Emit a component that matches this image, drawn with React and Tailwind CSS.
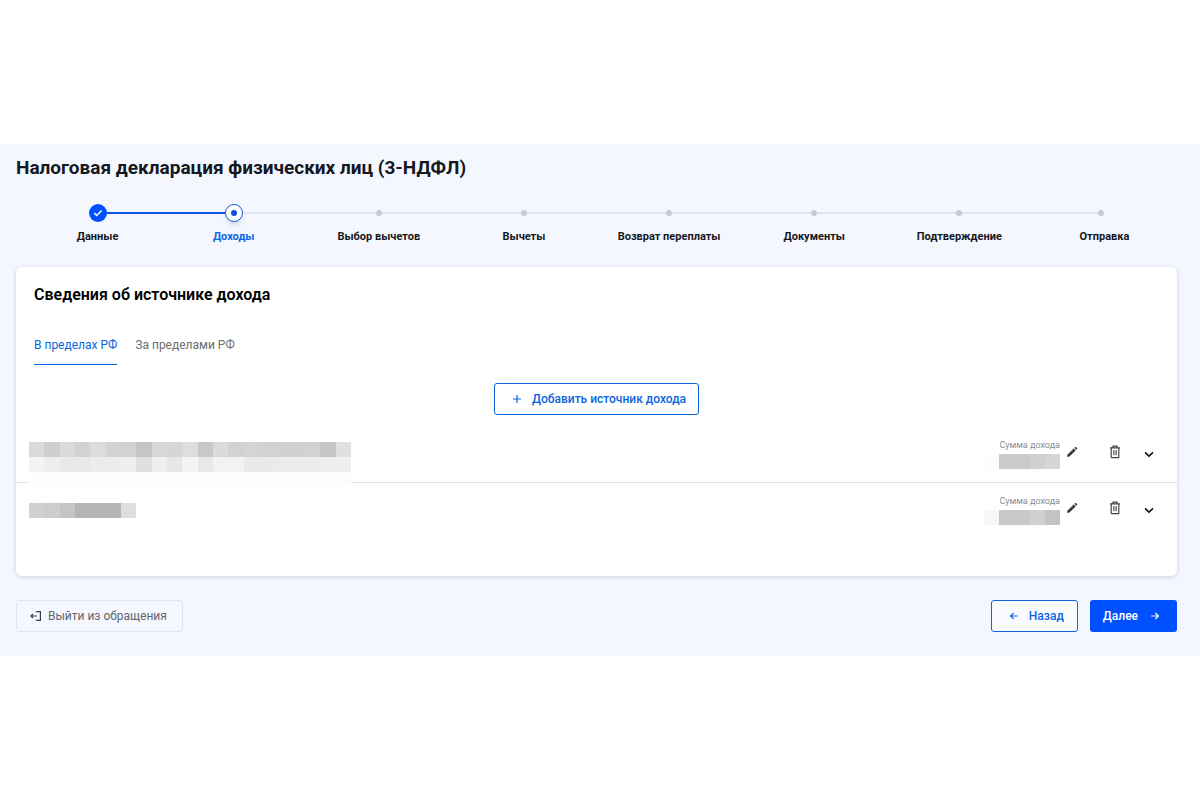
import React, { useState } from "react";

const steps = [
  "Данные",
  "Доходы",
  "Выбор вычетов",
  "Вычеты",
  "Возврат переплаты",
  "Документы",
  "Подтверждение",
  "Отправка",
];

const tabs = ["В пределах РФ", "За пределами РФ"];

// Masked values are drawn as rows of gray cells
const sources = [
  {
    id: 1,
    name: [
      ["#dadada", "#cecece", "#dadada", "#d2d2d2", "#dcdcdc", "#d3d3d3", "#d2d2d2", "#c5c5c5", "#d7d7d7", "#d6d6d6", "#dedede", "#c8c8c8", "#dbdbdb", "#d2d2d2", "#d4d4d4", "#d2d2d2", "#d1d1d1", "#d1d1d1", "#d2d2d2", "#c6c6c6", "#e0e0e0"],
      ["#f3f3f3", "#eeeeee", "#e9e9e9", "#e9e9e9", "#ececec", "#ebebeb", "#eeeeee", "#e0e0e0", "#efefef", "#e7e7e7", "#f3f3f3", "#e8e8e8", "#f2f2f2", "#f2f2f2", "#e9e9e9", "#eaeaea", "#ebebeb", "#ebebeb", "#ececec", "#eeeeee", "#efefef"],
    ],
    sum: ["#fdfdfd", "#cacaca", "#cacaca", "#d0d0d0", "#d6d6d6"],
  },
  {
    id: 2,
    name: [["#d0d0d0", "#cdcdcd", "#c5c5c5", "#b5b5b5", "#b5b5b5", "#b5b5b5", "#dedede"]],
    sum: ["#f7f7f7", "#c8c8c8", "#c8c8c8", "#d0d0d0", "#c3c3c3"],
  },
];

const Cells = ({ colors }) => (
  <div className="flex">
    {colors.map((color, i) => (
      <span
        key={i}
        className="h-[15px] flex-1"
        style={{ backgroundColor: color }}
      />
    ))}
  </div>
);

const PlusIcon = () => (
  <svg width="10" height="10" viewBox="0 0 10 10" fill="none" stroke="currentColor" strokeWidth="1.2">
    <path d="M5 1v8M1 5h8" />
  </svg>
);

const ArrowIcon = ({ className }) => (
  <svg
    className={className}
    width="10"
    height="10"
    viewBox="0 0 10 10"
    fill="none"
    stroke="currentColor"
    strokeWidth="1.2"
  >
    <path d="M1.2 5h7.4M5.4 2 8.4 5 5.4 8" />
  </svg>
);

const ExitIcon = () => (
  <svg width="12" height="12" viewBox="0 0 12 12" fill="none" stroke="#3a3e46" strokeWidth="1.2">
    <path d="M5.8 1.6h4.6v8.8H5.8" />
    <path d="M1 6h6M3 4 1 6l2 2" />
  </svg>
);

const PencilIcon = () => (
  <svg width="12" height="12" viewBox="0 0 12 12" fill="#3c3c3c">
    <path d="M1 11l.5-2.5 6.2-6 2 2-6.2 6L1 11z" />
    <path d="M8.3 1.9l.8-.8c.3-.3.7-.3 1 0l.9.9c.3.3.3.7 0 1l-.8.8-1.9-1.9z" />
  </svg>
);

const TrashIcon = () => (
  <svg width="12" height="14" viewBox="0 0 12 14" fill="none" stroke="#444" strokeWidth="1.2">
    <path d="M1 2.8h10M4 2.6V1.2h4v1.4" />
    <path d="M2.2 3v8.7c0 .5.4.9.9.9h5.8c.5 0 .9-.4.9-.9V3" />
    <path d="M4.6 5.2v5M6 5.2v5M7.4 5.2v5" strokeWidth=".8" />
  </svg>
);

const ChevronIcon = () => (
  <svg width="10" height="7" viewBox="0 0 10 7" fill="none" stroke="#111" strokeWidth="1.6">
    <path d="M1 1.4l4 3.8 4-3.8" />
  </svg>
);

const StepMarker = ({ state }) => {
  if (state === "done") {
    return (
      <span className="flex h-[18px] w-[18px] items-center justify-center rounded-full bg-[#0050ff]">
        <svg width="10" height="8" viewBox="0 0 10 8" fill="none" stroke="#fff" strokeWidth="1.5">
          <path d="M1.2 4l2.5 2.4L8.6 1.4" />
        </svg>
      </span>
    );
  }
  if (state === "current") {
    return (
      <span className="flex h-[18px] w-[18px] items-center justify-center rounded-full border border-[#0f5fe0] bg-white shadow-md">
        <span className="h-[6px] w-[6px] rounded-full bg-[#0b52d8]" />
      </span>
    );
  }
  return <span className="h-[6px] w-[6px] rounded-full bg-[#c7cad3]" />;
};

const Stepper = ({ current }) => {
  const lineColor = (visible, passed) => {
    if (!visible) return "bg-transparent";
    return passed ? "bg-[#0b55dc]" : "bg-[#e0e3ea]";
  };

  return (
    <ol className="grid grid-cols-8">
      {steps.map((step, i) => {
        const state = i < current ? "done" : i === current ? "current" : "next";
        return (
          <li key={step} className="first:pl-[18px]">
            <div
              className={`flex h-[18px] items-center ${
                i === steps.length - 1 ? "pr-1.5" : ""
              }`}
            >
              <span className={`h-[2px] flex-1 ${lineColor(i > 0, i <= current)}`} />
              <StepMarker state={state} />
              <span
                className={`h-[2px] flex-1 ${lineColor(
                  i < steps.length - 1,
                  i < current
                )}`}
              />
            </div>
            <p
              className={`mt-[7px] whitespace-nowrap text-center text-[11px] leading-4 font-bold ${
                state === "current" ? "text-[#0a66e8]" : "text-[#15181e]"
              }`}
            >
              {step}
            </p>
          </li>
        );
      })}
    </ol>
  );
};

const SourceRow = ({ source }) => (
  <li className="flex h-14 items-start border-b border-[#e2e2e2] pl-[13px] pr-[23px] last:border-b-0">
    {source.name.length > 1 ? (
      <div className="relative mt-[15px] w-[322px]">
        {source.name.map((colors, i) => (
          <Cells key={i} colors={colors} />
        ))}
        <div className="h-3 bg-[#fdfdfd]" />
      </div>
    ) : (
      <div className="mt-5 w-[107px]">
        <Cells colors={source.name[0]} />
      </div>
    )}

    <div className="ml-auto mt-3 w-[76px]">
      <p className="text-right text-[9px] leading-3 text-[#8b8b8b]">Сумма дохода</p>
      <div className="mt-[3px]">
        <Cells colors={source.sum} />
      </div>
    </div>

    <button className="ml-1.5 mt-[19px]" aria-label="Редактировать">
      <PencilIcon />
    </button>
    <button className="ml-[31px] mt-[18px]" aria-label="Удалить">
      <TrashIcon />
    </button>
    <button className="ml-[23px] mt-6" aria-label="Развернуть">
      <ChevronIcon />
    </button>
  </li>
);

const App = () => {
  const [activeTab, setActiveTab] = useState(0);

  return (
    <div className="flex min-h-screen items-center bg-white font-['Roboto','Noto_Sans',sans-serif]">
      <main className="w-full bg-[#f4f7fe] pb-6 pl-4 pr-[23px] pt-3">
        <h1 className="text-[19px] leading-6 font-bold text-[#15181e]">
          Налоговая декларация физических лиц (3-НДФЛ)
        </h1>

        <div className="mt-6">
          <Stepper current={1} />
        </div>

        <section className="mt-[22px] rounded-md bg-white pb-[37px] pt-4 shadow-[0_1px_4px_rgba(40,50,80,0.2)]">
          <div className="px-[18px]">
            <h2 className="text-base leading-6 font-semibold text-black">
              Сведения об источнике дохода
            </h2>

            <div className="mt-6 flex gap-[18px]" role="tablist">
              {tabs.map((tab, i) => (
                <button
                  key={tab}
                  role="tab"
                  aria-selected={activeTab === i}
                  onClick={() => setActiveTab(i)}
                  className={`border-b pb-2.5 pt-[5px] text-xs leading-[18px] ${
                    activeTab === i
                      ? "border-b-[#0a66e0] text-[#0a66e0]"
                      : "border-b-transparent text-[#6e6e6e]"
                  }`}
                >
                  {tab}
                </button>
              ))}
            </div>

            <div className="mt-[18px] flex justify-center">
              <button className="flex h-8 items-center gap-2.5 rounded-[3px] border border-[#0a66e0] pl-[17px] pr-3 text-xs font-medium text-[#0a66e0]">
                <PlusIcon />
                Добавить источник дохода
              </button>
            </div>
          </div>

          <ul className="mt-3">
            {sources.map((source) => (
              <SourceRow key={source.id} source={source} />
            ))}
          </ul>
        </section>

        <footer className="mt-6 flex items-center text-xs">
          <button className="flex h-8 items-center gap-1.5 rounded-[3px] border border-[#e0e4ec] pl-[13px] pr-[15px] text-[#62666f]">
            <ExitIcon />
            Выйти из обращения
          </button>
          <button className="ml-auto flex h-8 items-center gap-2.5 rounded-[3px] border border-[#0a66e0] bg-white/50 pl-[17px] pr-[13px] font-medium text-[#0a66e0]">
            <ArrowIcon className="rotate-180" />
            Назад
          </button>
          <button className="ml-3 flex h-8 items-center gap-3 rounded-[3px] bg-[#0050ff] pl-[13px] pr-[17px] font-medium text-white">
            Далее
            <ArrowIcon />
          </button>
        </footer>
      </main>
    </div>
  );
};

export default App;
